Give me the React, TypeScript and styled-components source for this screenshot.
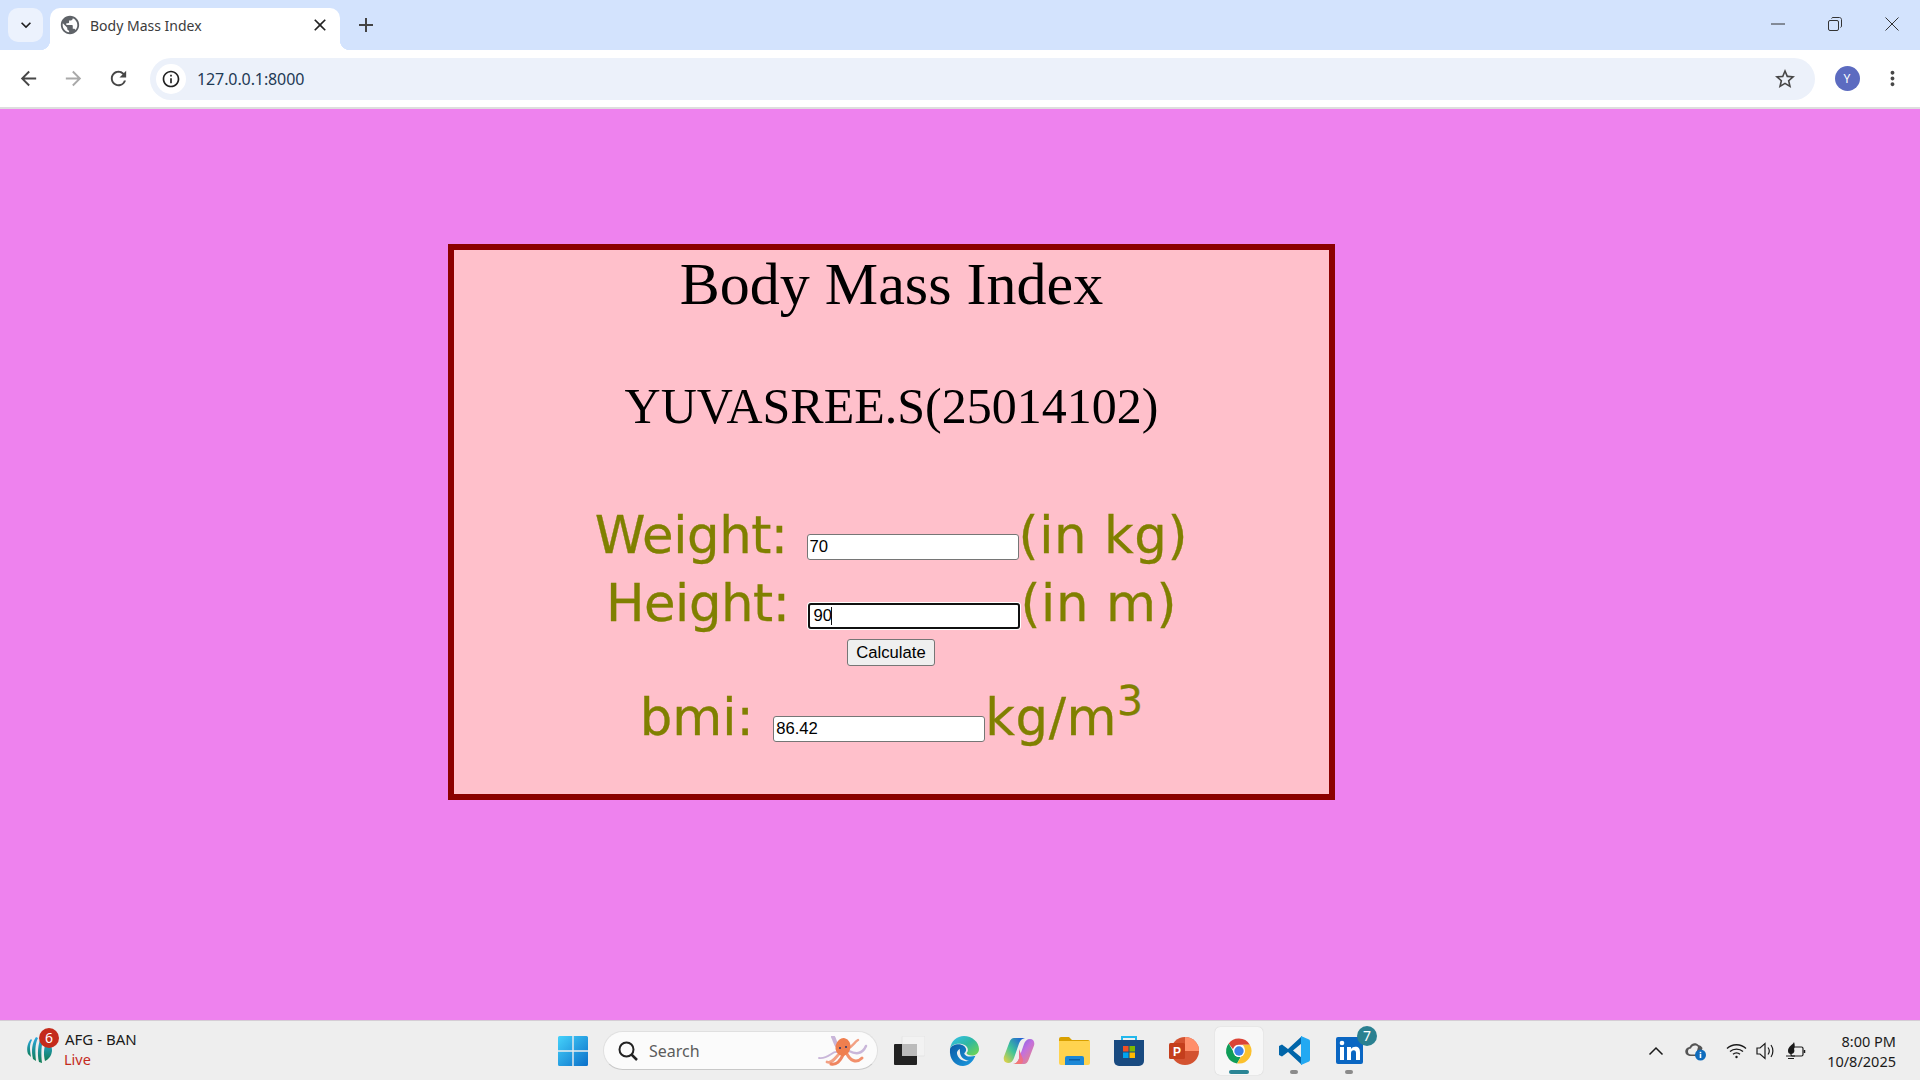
import React from 'react';
import styled, { createGlobalStyle } from 'styled-components';
import { MdArrowBack, MdArrowForward, MdRefresh, MdStarBorder, MdMoreVert, MdClose, MdAdd, MdKeyboardArrowDown, MdPublic, MdInfoOutline } from 'react-icons/md';

const Global = createGlobalStyle`
  html, body { margin: 0; padding: 0; height: 100%; overflow: hidden; }
  #root { height: 100%; }
`;
const Screen = styled.div`
  width: 1920px; height: 1080px; display: flex; flex-direction: column;
  font-family: "Noto Sans", "Open Sans", sans-serif;
`;
const TabStrip = styled.div`
  height: 50px; background: #d3e3fd; display: flex; align-items: flex-end; padding-left: 8px; color: #1f1f1f; flex: none;
`;
const TabMenu = styled.div`
  width: 35px; height: 34px; margin-bottom: 8px; border-radius: 10px; background: #ecf2fd;
  display: flex; align-items: center; justify-content: center; font-size: 20px; color: #1f1f1f;
`;
const Tab = styled.div`
  width: 290px; height: 42.500px; margin-left: 7px; background: #fff; border-radius: 10px 10px 0 0;
  display: flex; align-items: center; padding: 0 10px 7px 9px; box-sizing: border-box; font-size: 14px; color: #3c3c3c; gap: 10px;
  position: relative;
  &::before, &::after { content: ""; position: absolute; bottom: 0; width: 10px; height: 10px; }
  &::before { left: -10px; background: radial-gradient(circle at 0 0, #d3e3fd 10px, #fff 10.500px); }
  &::after { right: -10px; background: radial-gradient(circle at 100% 0, #d3e3fd 10px, #fff 10.500px); }
`;
const TabTitle = styled.span`
  flex: 1; font-size: 14px; white-space: nowrap; margin-left: -1px;
`;
const NewTab = styled.div`
  margin: 0 0 8px 9px; width: 34px; height: 34px; display: flex; align-items: center; justify-content: center; font-size: 24px; color: #444;
`;
const WindowControls = styled.div`
  margin-left: auto; height: 50px; display: flex; align-self: flex-start; color: #333;
`;
const WinButton = styled.div`
  width: 57px; height: 48px; display: flex; align-items: center; justify-content: center;
`;
const Toolbar = styled.div`
  height: 59px; flex: none; background: #fff; border-radius: 10px 10px 0 0; border-bottom: 2px solid #dedede; box-sizing: border-box;
  display: flex; align-items: center; padding: 0 5.500px 0 6px; color: #474747;
`;
const NavButton = styled.div<{ $muted?: boolean }>`
  width: 45px; height: 40px; display: flex; align-items: center; justify-content: center; font-size: 23px;
  color: ${(p) => (p.$muted ? '#a9a9a9' : '#474747')};
`;
const AddressBar = styled.div`
  flex: 1; height: 42px; margin: 0 20px 0 9px; background: #ecf1fa; border-radius: 21px; display: flex; align-items: center; padding: 0 18px 0 6px;
`;
const SiteInfo = styled.div`
  width: 30px; height: 30px; border-radius: 50%; background: #fff; display: flex; align-items: center; justify-content: center; font-size: 20px; color: #222;
`;
const Url = styled.span`
  margin-left: 11px; font-size: 16px; color: #1f3a55; flex: 1; letter-spacing: -0.100px;
`;
const Avatar = styled.div`
  width: 25px; height: 25px; border-radius: 50%; background: #5c6bc0; color: #fff; font-size: 12px; display: flex; align-items: center; justify-content: center; margin: 0 10px 0 0; flex: none;
`;
const Viewport = styled.main`
  flex: 1; background: violet; padding: 135px 0 0 448px; box-sizing: border-box; min-height: 0;
`;
const Card = styled.div`
  width: 887px; height: 556px; box-sizing: border-box; border: 6px solid darkred; background: pink; text-align: center; color: #000;
  font-family: "Liberation Serif", "Times New Roman", serif;
`;
const Title = styled.h1`
  margin: 0; font-weight: 400; font-size: 60px; line-height: 69px;
`;
const Author = styled.h2`
  margin: 58px 0 0; font-weight: 400; font-size: 50px; line-height: 58px;
`;
const Row = styled.div<{ $top: number }>`
  font-family: "DejaVu Sans", Verdana, sans-serif; font-size: 51.300px; color: #808000; -webkit-text-stroke: 0.300px #808000;
  line-height: 68px; margin-top: ${(p) => p.$top}px; white-space: nowrap;
`;
const Label = styled.span<{ $tight?: boolean }>`
  letter-spacing: ${(p) => (p.$tight ? '-0.450px' : '0')};
`;
const Gap = styled.span<{ $w: number }>`
  display: inline-block; width: ${(p) => p.$w}px;
`;
const Unit = styled.span`
  letter-spacing: 0.600px;
`;
const FieldWrap = styled.span<{ $lift?: boolean }>`
  display: inline-block; position: relative; font-size: 16.670px; line-height: 19px; -webkit-text-stroke: 0;
  vertical-align: ${(p) => (p.$lift ? '1px' : 'baseline')};
`;
const Field = styled.input<{ $focused?: boolean }>`
  display: inline-block; width: 212px; height: 26px; box-sizing: border-box; margin: 0; background: #fff; color: #000;
  padding: 1px ${(p) => (p.$focused ? 3 : 2)}px;
  border: ${(p) => (p.$focused ? '2.500px solid #101010' : '1.250px solid #767676')};
  border-radius: 3px; font-family: "Liberation Sans", Arial, sans-serif; font-size: 16.670px; outline: none;
  box-shadow: ${(p) => (p.$focused ? '0 0 0 1px #fff' : 'none')};
`;
const Caret = styled.span`
  position: absolute; left: 23px; top: 4px; width: 1px; height: 18px; background: #111;
`;
const Sup = styled.sup`
  font-size: 41px; line-height: 0; vertical-align: 20px;
`;
const CalcRow = styled.div`
  height: 27px; margin-top: 2px; display: flex; justify-content: center;
`;
const CalcButton = styled.button`
  width: 87.500px; height: 27px; margin-right: 1px; padding: 0; border: 1.250px solid #767676; border-radius: 3px; background: #efefef; color: #000;
  font-family: "Liberation Sans", Arial, sans-serif; font-size: 16.670px;
`;
const Taskbar = styled.footer`
  height: 60px; flex: none; box-sizing: border-box; background: #eeeeee; border-top: 1px solid #d5cdd5; display: flex; align-items: center; color: #1a1a1a;
`;
const Widget = styled.div`
  width: 558px; flex: none; display: flex; align-items: center; padding: 0 0 4px 26px; box-sizing: border-box; gap: 12px; position: relative;
`;
const WidgetBadge = styled.span`
  position: absolute; left: 39px; top: -1px; width: 20px; height: 20px; border-radius: 50%; background: #c42b1c; color: #fff; font-size: 14px;
  display: flex; align-items: center; justify-content: center;
`;
const WidgetText = styled.div`
  font-size: 15px; line-height: 20px; white-space: nowrap;
`;
const LiveText = styled.div`
  color: #c42b1c; font-size: 14.500px; margin-left: -1px;
`;
const StartIcon = styled.div`
  width: 30px; height: 30px; flex: none; display: flex;
`;
const SearchBox = styled.div`
  width: 275px; height: 39px; margin-left: 15px; box-sizing: border-box; border-radius: 20px; background: #fbfbfb; border: 1px solid #e0e0e0; border-bottom-color: #c8c8c8;
  display: flex; align-items: center; padding: 0 9px 0 14px; font-size: 16px; color: #5c5c5c; flex: none;
`;
const SearchLabel = styled.span`
  margin-left: 11px; flex: 1;
`;
const Apps = styled.div`
  display: flex; gap: 7px; margin-left: 7px; align-items: center;
`;
const AppButton = styled.div<{ $active?: boolean }>`
  width: 48px; height: 48px; position: relative; display: flex; align-items: center; justify-content: center; border-radius: 5px;
  background: ${(p) => (p.$active ? '#f7f7f7' : 'transparent')};
  box-shadow: ${(p) => (p.$active ? '0 0 1px #bbb' : 'none')};
`;
const RunDot = styled.span<{ $active?: boolean }>`
  position: absolute; bottom: 1px; left: 50%; transform: translateX(-50%); height: 4px; border-radius: 2px;
  width: ${(p) => (p.$active ? 20 : 8)}px; background: ${(p) => (p.$active ? '#2a8595' : '#8a8a8a')};
`;
const AppBadge = styled.span`
  position: absolute; right: -4px; top: -1px; width: 20px; height: 20px; border-radius: 50%; background: #2a8090; color: #fff; font-size: 14px;
  display: flex; align-items: center; justify-content: center;
`;
const Tray = styled.div`
  margin-left: auto; display: flex; align-items: center;
`;
const TrayIcon = styled.div<{ $w: number }>`
  width: ${(p) => p.$w}px; display: flex; justify-content: center; color: #1a1a1a;
`;
const Clock = styled.div`
  width: 80px; margin-right: 24px; text-align: right; font-size: 14.500px; line-height: 20px; white-space: nowrap;
`;

const Chrome = () => (
  <svg width="30" height="30" viewBox="0 0 48 48">
    <path fill="#db4437" d="M24 4a20 20 0 0 1 17.300 10H24a10 10 0 0 0-9.500 7L7.500 11.800A20 20 0 0 1 24 4z" />
    <path fill="#0f9d58" d="M7.500 11.800 16.200 27a10 10 0 0 0 10.400 6.700L20.900 43.800A20 20 0 0 1 7.500 11.800z" />
    <path fill="#fbc02d" d="M41.300 14A20 20 0 0 1 21 43.800L29.600 28.700A10 10 0 0 0 30 14z" />
    <circle cx="24" cy="24" r="9.500" fill="#fff" />
    <circle cx="24" cy="24" r="7.500" fill="#3b82e8" />
  </svg>
);
const Edge = () => (
  <svg width="32" height="32" viewBox="0 0 32 32">
    <defs>
      <linearGradient id="eg1" x1="0" y1="0" x2="1" y2="1"><stop offset="0" stopColor="#35c1f1" /><stop offset="0.500" stopColor="#2fb8a0" /><stop offset="1" stopColor="#75d84a" /></linearGradient>
      <linearGradient id="eg2" x1="0" y1="0" x2="1" y2="1"><stop offset="0" stopColor="#0c59a4" /><stop offset="1" stopColor="#1b9de2" /></linearGradient>
    </defs>
    <path fill="url(#eg1)" d="M2 14C3 6 9 1 16 1c8 0 15 6 15 13 0 4-3 6.500-7 6.500-3 0-5.500-1-5.500-2.500 2-1.500 2-5-1-7.500C13 7.500 4 8 2 14z" />
    <path fill="url(#eg2)" d="M2 14c2-5 10-6 14-3 2.500 2 3 5 .5 7-1 1 2 4 6 3.500 3.500 0 5-1 5-1C25 27 20 31 15 31 7 31 1 24 2 14z" />
    <path fill="#eee" d="M12 17c0 5 4 8 9 8.800-5 1.500-11-1.500-12-7-.5-2 1-4 3-4.800-.3 1-.2 2 0 3z" />
  </svg>
);
const Copilot = () => (
  <svg width="32" height="30" viewBox="0 0 32 30">
    <defs>
      <linearGradient id="cp1" x1="0" y1="1" x2="1" y2="0"><stop offset="0" stopColor="#f5d33c" /><stop offset="0.450" stopColor="#3fc49a" /><stop offset="1" stopColor="#1a4fe0" /></linearGradient>
      <linearGradient id="cp2" x1="0" y1="0" x2="1" y2="1"><stop offset="0" stopColor="#5b5fe8" /><stop offset="0.500" stopColor="#c270df" /><stop offset="1" stopColor="#f08a70" /></linearGradient>
      <linearGradient id="cp3" x1="0" y1="1" x2="1" y2="0"><stop offset="0" stopColor="#f7845f" /><stop offset="1" stopColor="#e85fa8" /></linearGradient>
    </defs>
    <path fill="url(#cp1)" d="M11 2h11c-3 .5-5 2.500-6 5.500L11 22c-1 3-3 5-6 5-3.500 0-5-3-4-6.500L6.500 6C7.500 3.500 9 2 11 2z" />
    <path fill="url(#cp2)" d="M21 28H10c3-.5 5-2.500 6-5.500L21 8c1-3 3-5 6-5 3.500 0 5 3 4 6.500L25.500 24c-1 2.500-2.500 4-4.500 4z" />
    <path fill="url(#cp3)" d="M16 13l4 10c1 2.500-.5 5-3 5h-7c3-.5 5-2.500 6-5.500z" />
  </svg>
);
const Folder = () => (
  <svg width="31" height="28" viewBox="0 0 31 28">
    <path fill="#d9a000" d="M0 2a2 2 0 0 1 2-2h8l3 3h16a2 2 0 0 1 2 2v5H0z" />
    <path fill="#ffd34f" d="M0 4h31v22a2 2 0 0 1-2 2H2a2 2 0 0 1-2-2z" />
    <path fill="#1b87d6" d="M6 28v-7a2 2 0 0 1 2-2h15a2 2 0 0 1 2 2v7z" />
    <rect x="10" y="22" width="11" height="1.500" fill="#0b5da3" />
  </svg>
);
const Store = () => (
  <svg width="30" height="31" viewBox="0 0 30 31">
    <path d="M8 5V2h14v3" fill="none" stroke="#22b8ec" strokeWidth="2" />
    <path fill="#194a80" d="M0 5h30v21a5 5 0 0 1-5 5H5a5 5 0 0 1-5-5z" />
    <rect x="9" y="11" width="5.500" height="5.500" fill="#f25022" />
    <rect x="15.500" y="11" width="5.500" height="5.500" fill="#7fba00" />
    <rect x="9" y="17.500" width="5.500" height="5.500" fill="#00a4ef" />
    <rect x="15.500" y="17.500" width="5.500" height="5.500" fill="#ffb900" />
  </svg>
);
const Ppt = () => (
  <svg width="30" height="30" viewBox="0 0 30 30">
    <circle cx="16" cy="15" r="14" fill="#d35230" />
    <path fill="#ff8f6b" d="M16 1a14 14 0 0 1 14 14H16z" />
    <rect x="0" y="7" width="16" height="16" rx="1.500" fill="#c43e1c" />
    <text x="8" y="20" textAnchor="middle" fontFamily="Liberation Sans, sans-serif" fontWeight="700" fontSize="12" fill="#fff">P</text>
  </svg>
);
const VsCode = () => (
  <svg width="31" height="31" viewBox="0 0 31 31">
    <path fill="#0065a9" d="M23 1 9 14 3 9.500 0 11v9l3 1.500L9 17l14 13 0-7-9-7.500 9-7.500z" />
    <path fill="#23a9f2" d="M22 1l8 3.500c.6.300 1 1 1 1.800v18.400c0 .8-.4 1.500-1 1.800L22 30z" />
  </svg>
);
const LinkedIn = () => (
  <svg width="27" height="27" viewBox="0 0 27 27">
    <rect width="27" height="27" rx="2" fill="#0a66c2" />
    <rect x="4" y="10" width="4" height="13" fill="#fff" />
    <circle cx="6" cy="6" r="2.300" fill="#fff" />
    <path fill="#fff" d="M11 10h4v2c1-1.500 2.500-2.300 4.300-2.300 3.400 0 4.700 2 4.700 5.800V23h-4v-6.800c0-2-.6-3-2.200-3-1.700 0-2.800 1.100-2.800 3.200V23h-4z" />
  </svg>
);
const Octopus = () => (
  <svg width="50" height="30" viewBox="0 0 50 30">
    <g fill="none" strokeLinecap="round">
      <path d="M19 16C14 15 11 23 1 22" stroke="#c9b6d9" strokeWidth="1.800" />
      <path d="M21 18C17 22 14 28 9 26" stroke="#f2a184" strokeWidth="2.800" />
      <path d="M25 19C22 25 19 29 13 28" stroke="#ef8560" strokeWidth="3" />
      <path d="M29 18C32 24 38 28 44 22" stroke="#f2906c" strokeWidth="3" />
      <path d="M31 15C37 18 44 19 48 10" stroke="#c9b6d9" strokeWidth="2.500" />
      <path d="M30 12C35 11 36 6 40 4" stroke="#f2a184" strokeWidth="2.500" />
      <path d="M20 11C17 8 17 4 15 1" stroke="#c9b6d9" strokeWidth="4" />
    </g>
    <ellipse cx="25" cy="11" rx="7.500" ry="9" fill="#ef7f4f" transform="rotate(12 25 11)" />
    <circle cx="22" cy="12" r="1" fill="#25356e" />
    <circle cx="28" cy="11" r="1" fill="#25356e" />
  </svg>
);
const Logo = () => (
  <svg width="27" height="30" viewBox="0 0 27 30">
    <defs>
      <linearGradient id="lg" x1="0" y1="0" x2="0" y2="1"><stop offset="0" stopColor="#2aa7e0" /><stop offset="1" stopColor="#0f7d54" /></linearGradient>
    </defs>
    <g fill="url(#lg)">
      <path d="M2 20C0 14 2 8 5 5L6 6C3 11 4 16 5 23z" />
      <path d="M7 25C5 17 6 9 10 3l2 1C9 10 9 17 10 27z" />
      <path d="M13 28C11 20 12 10 15 3l3 0C15 11 15 20 16 29z" />
      <path d="M19 27C17 20 18 12 21 6c3 2 5 6 5 10 0 5-3 9-7 11z" />
    </g>
  </svg>
);

export default function App() {
  return (
    <Screen>
      <Global />
      <TabStrip>
        <TabMenu><MdKeyboardArrowDown /></TabMenu>
        <Tab>
          <MdPublic size={22} color="#5f6368" />
          <TabTitle>Body Mass Index</TabTitle>
          <MdClose size={20} color="#222" />
        </Tab>
        <NewTab><MdAdd /></NewTab>
        <WindowControls>
          <WinButton>
            <svg width="14" height="2" viewBox="0 0 14 2"><path d="M0 1h14" stroke="#333" strokeWidth="1" /></svg>
          </WinButton>
          <WinButton>
            <svg width="14" height="14" viewBox="0 0 14 14" fill="none" stroke="#333"><rect x="0.500" y="3.500" width="10" height="10" rx="1.500" /><path d="M3.500 1.500c.3-.7.800-1 1.500-1h6.500c1 0 2 1 2 2V9c0 .7-.3 1.200-1 1.500" /></svg>
          </WinButton>
          <WinButton>
            <svg width="14" height="14" viewBox="0 0 14 14"><path d="M.5.500l13 13M13.500.500l-13 13" stroke="#333" strokeWidth="1" /></svg>
          </WinButton>
        </WindowControls>
      </TabStrip>
      <Toolbar>
        <NavButton><MdArrowBack /></NavButton>
        <NavButton $muted><MdArrowForward /></NavButton>
        <NavButton><MdRefresh /></NavButton>
        <AddressBar>
          <SiteInfo><MdInfoOutline /></SiteInfo>
          <Url>127.0.0.1:8000</Url>
          <MdStarBorder size={24} color="#474747" />
        </AddressBar>
        <Avatar>Y</Avatar>
        <NavButton><MdMoreVert /></NavButton>
      </Toolbar>
      <Viewport>
        <Card>
          <Title>Body Mass Index</Title>
          <Author>YUVASREE.S(25014102)</Author>
          <Row $top={65.500}><Label $tight>Weight: </Label><Gap $w={3} /><FieldWrap $lift><Field readOnly value="70" /></FieldWrap><Unit>(in kg)</Unit></Row>
          <Row $top={0.500}><Label $tight>Height: </Label><Gap $w={3} /><FieldWrap><Field $focused readOnly value="90" /><Caret /></FieldWrap><Unit>(in m)</Unit></Row>
          <CalcRow><CalcButton>Calculate</CalcButton></CalcRow>
          <Row $top={16.500}><Label>bmi: </Label><Gap $w={3} /><FieldWrap $lift><Field readOnly value="86.42" /></FieldWrap><Unit>kg/m</Unit><Sup>3</Sup></Row>
        </Card>
      </Viewport>
      <Taskbar>
        <Widget>
          <Logo />
          <WidgetBadge>6</WidgetBadge>
          <WidgetText>AFG - BAN<LiveText>Live</LiveText></WidgetText>
        </Widget>
        <StartIcon>
          <svg width="30" height="30" viewBox="0 0 30 30">
            <defs><linearGradient id="win" x1="0" y1="0" x2="1" y2="1"><stop offset="0" stopColor="#45d2fb" /><stop offset="1" stopColor="#0a6fc9" /></linearGradient></defs>
            <path fill="url(#win)" d="M0 1.500A1.500 1.500 0 0 1 1.500 0H14.300V14.300H0zM15.700 0H28.500A1.500 1.500 0 0 1 30 1.500V14.300H15.700zM0 15.700H14.300V30H1.500A1.500 1.500 0 0 1 0 28.500zM15.700 15.700H30V28.500A1.500 1.500 0 0 1 28.500 30H15.700z" />
          </svg>
        </StartIcon>
        <SearchBox>
          <svg width="20" height="20" viewBox="0 0 20 20" fill="none" stroke="#222" strokeWidth="2"><circle cx="8.500" cy="8.500" r="7" /><path d="M13.500 13.500l5.500 5.500" strokeWidth="2.500" /></svg>
          <SearchLabel>Search</SearchLabel>
          <Octopus />
        </SearchBox>
        <Apps>
          <AppButton>
            <svg width="31" height="29" viewBox="0 0 31 29">
              <rect x="8" y="0" width="23" height="20" rx="1" fill="#f2f2f2" stroke="#e4e4e4" />
              <rect x="0" y="8" width="23" height="21" rx="1" fill="#222" />
              <rect x="8" y="8" width="15" height="12" fill="#bbb" />
            </svg>
          </AppButton>
          <AppButton><Edge /></AppButton>
          <AppButton><Copilot /></AppButton>
          <AppButton><Folder /></AppButton>
          <AppButton><Store /></AppButton>
          <AppButton><Ppt /></AppButton>
          <AppButton $active><Chrome /><RunDot $active /></AppButton>
          <AppButton><VsCode /><RunDot /></AppButton>
          <AppButton><LinkedIn /><AppBadge>7</AppBadge><RunDot /></AppButton>
        </Apps>
        <Tray>
          <TrayIcon $w={40}>
            <svg width="16" height="10" viewBox="0 0 16 10" fill="none" stroke="#1a1a1a" strokeWidth="1.500"><path d="M1.500 8.500 8 2l6.500 6.500" /></svg>
          </TrayIcon>
          <TrayIcon $w={40}>
            <svg width="22" height="20" viewBox="0 0 22 20">
              <path fill="#555" d="M5 15a4.500 4.500 0 0 1-.5-9C6 2 11 1 13.500 4a5 5 0 0 1 4 3L15 15z" />
              <path fill="#eee" d="M6 13.500a3 3 0 0 1 0-6c1-3 5-4 7-1.500L11 13.500z" />
              <circle cx="15.500" cy="14" r="5.500" fill="#0f6cbd" />
              <rect x="14.700" y="13" width="1.600" height="4" fill="#fff" />
              <rect x="14.700" y="10.800" width="1.600" height="1.500" fill="#fff" />
            </svg>
          </TrayIcon>
          <TrayIcon $w={40}>
            <svg width="21" height="16" viewBox="0 0 21 16" fill="none" stroke="#1a1a1a" strokeWidth="1.300"><path d="M1 5.500c5.200-5 13.800-5 19 0M4 8.500c3.500-3.300 9.500-3.300 13 0M7 11.300c2-1.800 5-1.800 7 0" /><circle cx="10.500" cy="14" r="1.200" fill="#1a1a1a" stroke="none" /></svg>
          </TrayIcon>
          <TrayIcon $w={20}>
            <svg width="20" height="18" viewBox="0 0 20 18" fill="none" stroke="#1a1a1a" strokeWidth="1.200"><path d="M1 6h3l5-4.500v15L4 12H1zM12 5.500c1.500 2 1.500 5 0 7M15 3c2.500 3.500 2.500 8.500 0 12" /></svg>
          </TrayIcon>
          <TrayIcon $w={40}>
            <svg width="20" height="18" viewBox="0 0 20 18" fill="none" stroke="#1a1a1a" strokeWidth="1.200"><rect x="5" y="5" width="12" height="9" rx="1.500" /><path d="M18.500 8v3" strokeWidth="1.500" /><path d="M0 14h9M2 16.500h6" /><path fill="#1a1a1a" stroke="none" d="M8 0C7 3 2 4 2 9c0 2 1 3 3 3 3 0 4-3 3-5 1-2 1-4 0-7z" /></svg>
          </TrayIcon>
          <Clock>8:00 PM<br />10/8/2025</Clock>
        </Tray>
      </Taskbar>
    </Screen>
  );
}
